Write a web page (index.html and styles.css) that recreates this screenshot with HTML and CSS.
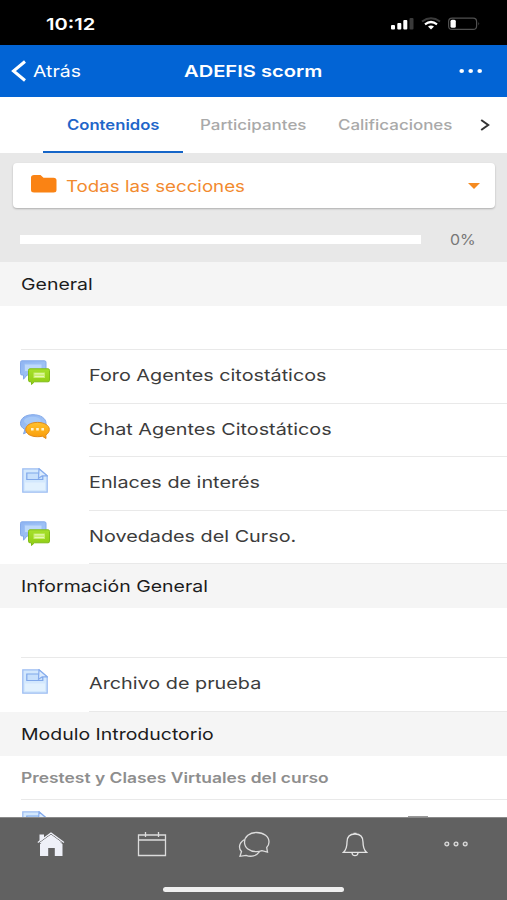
FILE: index.html
```html
<!DOCTYPE html>
<html lang="es">

<head>
    <meta charset="UTF-8">
    <meta name="viewport" content="width=device-width, initial-scale=1.0">
    <title>ADEFIS scorm</title>
    <link rel="stylesheet" href="styles.css">
</head>

<body>
    <!-- shared icons -->
    <svg class="sprite" width="0" height="0">
        <defs>
            <linearGradient id="green" x1="0" y1="0" x2="0" y2="1">
                <stop offset="0" stop-color="#a6e02c" />
                <stop offset="1" stop-color="#8fcc12" />
            </linearGradient>
            <linearGradient id="orange" x1="0" y1="0" x2="0" y2="1">
                <stop offset="0" stop-color="#ffc22e" />
                <stop offset="1" stop-color="#f99a08" />
            </linearGradient>
            <linearGradient id="blue" x1="0" y1="0" x2="1" y2="1">
                <stop offset="0" stop-color="#8fb4f2" />
                <stop offset="1" stop-color="#a9cbf8" />
            </linearGradient>
        </defs>
        <symbol id="forum" viewBox="0 0 30 26">
            <path d="M2 .8h22.500q1.500 0 1.500 1.500v11.200q0 1.500-1.500 1.500H7l-3.500 4.200V15H2Q.5 15 .5 13.500V2.300Q.5.8 2 .8z" fill="url(#blue)" stroke="#84aaeb" />
            <path d="M4.500 4h17.500v7.500H4.500z" fill="#bdd8fb" stroke="#9cc0f6" />
            <path d="M10 8.800h18q1.500 0 1.500 1.500v10q0 1.500-1.500 1.500H14.500L11.500 24.500V21.800H10q-1.500 0-1.500-1.500v-10q0-1.500 1.500-1.500z" fill="url(#green)" stroke="#7fbc18" />
            <path d="M13.500 12.500h11.500v5.500H13.500z" fill="#c9ee6e" />
            <path d="M14.500 13.800h9.500M14.500 16.500h9.500" stroke="#e6f9b4" />
        </symbol>
        <symbol id="chat" viewBox="0 0 30 26">
            <path d="M13 .7c7.500 0 13 3.600 13 8.600s-5 9-12 9c-2.500 0-4-.3-5.500-.8l-5 2.300 1.500-4.300C2 14 .5 12 .5 9.300.5 4.300 5.500.7 13 .7z" fill="url(#blue)" stroke="#7da5e8" />
            <ellipse cx="12.500" cy="7" rx="8.500" ry="4.200" fill="#a7c9f7" />
            <path d="M17.500 8.400c6.800 0 11.800 2.900 11.800 7.100 0 2.300-1.300 4.200-3.500 5.400l.2 3.600-3.700-2.300c-1.500.4-3 .5-4.800.5-6.800 0-11.800-3-11.800-7.200s5-7.100 11.800-7.100z" fill="url(#orange)" stroke="#e08a1a" />
            <path d="M11 14h2.600v2.400H11zM16.200 14h2.600v2.400h-2.600zM21.400 14h2.600v2.400h-2.600z" fill="#fff3cf" />
        </symbol>
        <symbol id="page" viewBox="0 0 26 25">
            <path d="M.8.8H17l8.200 7v16.400H.8z" fill="#d3e8fd" stroke="#9dbdf2" stroke-width="1.300" />
            <path d="M3 14.500h20v7.500H3z" fill="#e2f1fe" />
            <path d="M4.800 5h12v3.500h4V11.500h-16z" fill="#c7e0fc" stroke="#7fa7ea" stroke-width="1.200" />
            <path d="M17 .8l8.200 7h-5l-3.700 2.500z" fill="#dcecfe" stroke="#86acec" stroke-width="1.200" />
        </symbol>
    </svg>

    <div class="status-bar">
        <span class="clock wide">10:12</span>
        <svg class="signal" width="90" height="14" viewBox="0 0 90 14">
            <rect x="0" y="8" width="4" height="4.500" rx="1" fill="#fff" />
            <rect x="6.300" y="6" width="4" height="6.500" rx="1" fill="#fff" />
            <rect x="12.300" y="3" width="4" height="9.500" rx="1" fill="#fff" />
            <rect x="18.500" y="1" width="4" height="11.500" rx="1" fill="#3a3a3a" />
            <path d="M31 4.500q9-6.500 18 0" fill="none" stroke="#3c3c3c" stroke-width="2" />
            <path d="M34 7.300q6-4.600 12 0" fill="none" stroke="#fff" stroke-width="2.200" />
            <path d="M37 9.600q3-2.100 6 0l-3 3z" fill="#fff" />
            <rect x="57.600" y="1.100" width="28" height="11.300" rx="3.500" fill="none" stroke="#505050" stroke-width="1.200" />
            <rect x="59.500" y="2.800" width="5.300" height="8" rx="1.500" fill="#fff" />
            <path d="M87.500 5q1.500 1.700 0 3.500z" fill="#606060" />
        </svg>
    </div>

    <header class="header">
        <a class="back">
            <svg width="16" height="22" viewBox="0 0 16 22">
                <path d="M14 1.500L2.500 11 14 20.500" fill="none" stroke="#fff" stroke-width="3" />
            </svg>
            <span class="wide">Atrás</span>
        </a>
        <h1><span class="wide">ADEFIS scorm</span></h1>
        <svg class="more" width="24" height="6" viewBox="0 0 24 6">
            <g fill="#fff">
                <ellipse cx="2.700" cy="3" rx="2.300" ry="2" />
                <ellipse cx="11.700" cy="3" rx="2.300" ry="2" />
                <ellipse cx="20.700" cy="3" rx="2.300" ry="2" />
            </g>
        </svg>
    </header>

    <nav class="tabs">
        <a class="tab active"><span class="wide">Contenidos</span></a>
        <a class="tab"><span class="wide">Participantes</span></a>
        <a class="tab"><span class="wide">Calificaciones</span></a>
        <svg class="next" width="10" height="12" viewBox="0 0 10 12">
            <path d="M1.200 1L8.200 6l-7 5" fill="none" stroke="#333" stroke-width="2" />
        </svg>
    </nav>

    <div class="selector">
        <div class="select">
            <svg width="26" height="18" viewBox="0 0 26 18">
                <path d="M3 0h6.500l3 2.800H22.500q3 0 3 2.500V15q0 2.500-3 2.500H3q-3 0-3-2.500V2.500Q0 0 3 0z" fill="#fa8314" />
            </svg>
            <span class="wide">Todas las secciones</span>
            <i class="caret"></i>
        </div>
        <div class="progress">
            <div class="bar"></div>
            <span class="wide">0%</span>
        </div>
    </div>

    <main class="content">
        <h2><span class="wide">General</span></h2>
        <div class="summary"></div>
        <ul>
            <li><svg class="icon"><use href="#forum" /></svg><div><span class="wide">Foro Agentes citostáticos</span></div></li>
            <li><svg class="icon"><use href="#chat" /></svg><div><span class="wide">Chat Agentes Citostáticos</span></div></li>
            <li><svg class="icon page"><use href="#page" /></svg><div><span class="wide">Enlaces de interés</span></div></li>
            <li><svg class="icon"><use href="#forum" /></svg><div><span class="wide">Novedades del Curso.</span></div></li>
        </ul>

        <h2><span class="wide">Información General</span></h2>
        <div class="summary tall"></div>
        <ul>
            <li><svg class="icon page"><use href="#page" /></svg><div><span class="wide">Archivo de prueba</span></div></li>
        </ul>

        <h2><span class="wide">Modulo Introductorio</span></h2>
        <div class="summary"><span class="wide">Prestest y Clases Virtuales del curso</span></div>
        <ul>
            <li><svg class="icon page"><use href="#page" /></svg><div><i class="completion"></i></div></li>
        </ul>
    </main>

    <footer class="footer">
        <div class="footer-tabs">
            <a>
                <svg width="28" height="25" viewBox="0 0 28 25">
                    <path d="M2.500 11V2.500h4.500V6L14 1l12 9.500" fill="#eef0f8" stroke="none" />
                    <path d="M3 12L14 3.500 25.500 12V24h-7.700v-8h-6.600v8H3z" fill="#eef0f8" />
                    <path d="M.8 11.500L14 2l13 9.500" fill="none" stroke="#606060" stroke-width="1" />
                    <path d="M.8 10.500L14 1l13 9.500" fill="none" stroke="#eef0f8" stroke-width="1.200" />
                </svg>
            </a>
            <a>
                <svg width="30" height="25" viewBox="0 0 30 25">
                    <path d="M1.500 3h27v20.500h-27zM1.500 8h27M8.500 0v5M21.500 0v5" fill="none" stroke="#dcdcdc" stroke-width="1.300" />
                </svg>
            </a>
            <a>
                <svg width="32" height="27" viewBox="0 0 32 27">
                    <g fill="none" stroke="#dcdcdc" stroke-width="1.300">
                        <path d="M18.500 1.500c-7 0-12 4.300-12 9.700s5 9.500 12 9.500c2 0 4-.4 5.500-1l5.500 1.500-.8-4.700c1.500-1.600 2.300-3.500 2.300-5.500 0-5.300-5-9.500-12.500-9.500z" />
                        <path d="M6.500 8.500C3.500 10.300 1.500 12.800 1.500 16c0 1.600.7 3.200 2 4.500L2 25.300l6-1c5 2 10.500.7 13.500-3.600" />
                    </g>
                </svg>
            </a>
            <a>
                <svg width="26" height="25" viewBox="0 0 26 25">
                    <path d="M13 2C7.500 2 5 5.500 5 10c0 6-1 8-3.500 10.300h23C22 18 21 16 21 10c0-4.500-2.500-8-8-8zM10 21q.5 2.700 3 2.700t3-2.700M11.500 1.300h3" fill="none" stroke="#e4e4e4" stroke-width="1.300" />
                </svg>
            </a>
            <a>
                <svg width="26" height="6" viewBox="0 0 26 6">
                    <g fill="#777" stroke="#dadada" stroke-width="1.300">
                        <ellipse cx="3.800" cy="3" rx="1.900" ry="1.800" />
                        <ellipse cx="13" cy="3" rx="1.900" ry="1.800" />
                        <ellipse cx="22.200" cy="3" rx="1.900" ry="1.800" />
                    </g>
                </svg>
            </a>
        </div>
        <div class="home-indicator"></div>
    </footer>
</body>

</html>
```
FILE: styles.css
```css
* {
    box-sizing: border-box;
}

body {
    font-family: Inter, "Liberation Sans", sans-serif;
    font-size: 16px;
    margin: 0;
    height: 900px;
    display: flex;
    flex-direction: column;
    overflow: hidden;
    background-color: #fff;
    color: #3c3c3c;
}

.sprite {
    position: absolute;
}

h1,
h2,
ul {
    margin: 0;
    padding: 0;
    font-weight: 400;
}

/* extended lettering */
.wide {
    display: inline-block;
    white-space: nowrap;
    transform: scaleX(1.18);
    transform-origin: 0 50%;
}

.status-bar {
    flex: none;
    height: 45px;
    padding: 2px 26px 0 46px;
    display: flex;
    justify-content: space-between;
    align-items: center;
    background-color: #000;
    color: #fff;
}

.clock {
    font-size: 16.5px;
    font-weight: 600;
    transform: scaleX(1.22);
}

.header {
    flex: none;
    height: 52px;
    padding: 0 24px 0 11px;
    display: grid;
    grid-template-columns: 173px 1fr auto;
    align-items: center;
    background-color: #0264d5;
    color: #fff;
}

.back {
    display: flex;
    align-items: center;
    gap: 6px;
    font-size: 16.5px;
}

.header h1 {
    font-size: 16.5px;
    font-weight: 600;
}

.header h1 .wide {
    transform: scaleX(1.22);
}

.tabs {
    flex: none;
    height: 56px;
    padding: 0 17px 0 43px;
    display: flex;
    align-items: center;
    color: #a9a9a9;
    font-size: 14px;
    font-weight: 500;
}

.tab {
    width: 138px;
    height: 56px;
    padding-left: 17px;
    line-height: 55px;
}

.tab .wide {
    transform: scaleX(1.21);
}

.tab.active {
    width: 140px;
    padding-left: 24px;
    color: #1f66c9;
    font-weight: 600;
    border-bottom: 2px solid #1565c8;
}

.tab.active .wide {
    transform: scaleX(1.19);
}

.next {
    margin-left: auto;
}

.selector {
    flex: none;
    height: 109px;
    padding: 10px 12px 0 13px;
    background-color: #e8e8e8;
}

.select {
    height: 45px;
    padding: 0 15px 0 18px;
    display: flex;
    align-items: center;
    background-color: #fff;
    border-radius: 4px;
    box-shadow: 0 1px 2px rgba(0, 0, 0, 0.25);
    color: #f28a2e;
}

.select svg {
    margin: -3px 9px 0 0;
}

.select .wide {
    transform: scaleX(1.17);
}

.caret {
    margin-left: auto;
    border: 6.5px solid transparent;
    border-top: 6px solid #f58a20;
    border-bottom: 0;
}

.progress {
    display: flex;
    align-items: center;
    height: 62px;
    padding-left: 7px;
    color: #777;
    font-size: 14px;
}

.bar {
    width: 401px;
    height: 9px;
    margin-right: 29px;
    background-color: #fff;
}

.progress .wide {
    transform: scaleX(1.14);
}

.content {
    flex: 1;
    min-height: 0;
    overflow: hidden;
}

h2 {
    height: 44px;
    padding-left: 21px;
    line-height: 44px;
    font-size: 16.5px;
    background-color: #f5f5f5;
    color: #1c1c1c;
}

.summary {
    height: 44px;
    margin-left: 21px;
    border-bottom: 1px solid #e9e9e9;
    line-height: 44px;
    font-size: 14px;
    font-weight: 600;
    color: #8e8e8e;
}

.summary.tall {
    height: 50px;
}

.summary .wide {
    transform: scaleX(1.243);
}

ul {
    list-style-type: none;
}

li {
    display: flex;
    height: 53.5px;
    padding-left: 20px;
}

.icon {
    width: 30px;
    height: 26px;
    margin: 10px 39px 0 0;
}

.icon.page {
    width: 26px;
    height: 25px;
    margin: 11px 41px 0 2px;
}

li div {
    flex: 1;
    line-height: 51px;
    font-size: 16.5px;
    border-bottom: 1px solid #e9e9e9;
}

li .wide {
    transform: scaleX(1.2);
}

.completion {
    display: block;
    width: 20px;
    height: 20px;
    margin: 16px 0 0 319px;
    background-color: #999;
}

.footer {
    flex: none;
    height: 83px;
    background-color: #616161;
    border-top: 1px solid #8a8a8a;
}

.footer-tabs {
    display: flex;
    height: 52px;
}

.footer-tabs a {
    flex: 1;
    display: flex;
    justify-content: center;
    align-items: center;
}

.home-indicator {
    width: 181px;
    height: 5px;
    margin: 17px auto 0;
    border-radius: 3px;
    background-color: #efefef;
}
```
